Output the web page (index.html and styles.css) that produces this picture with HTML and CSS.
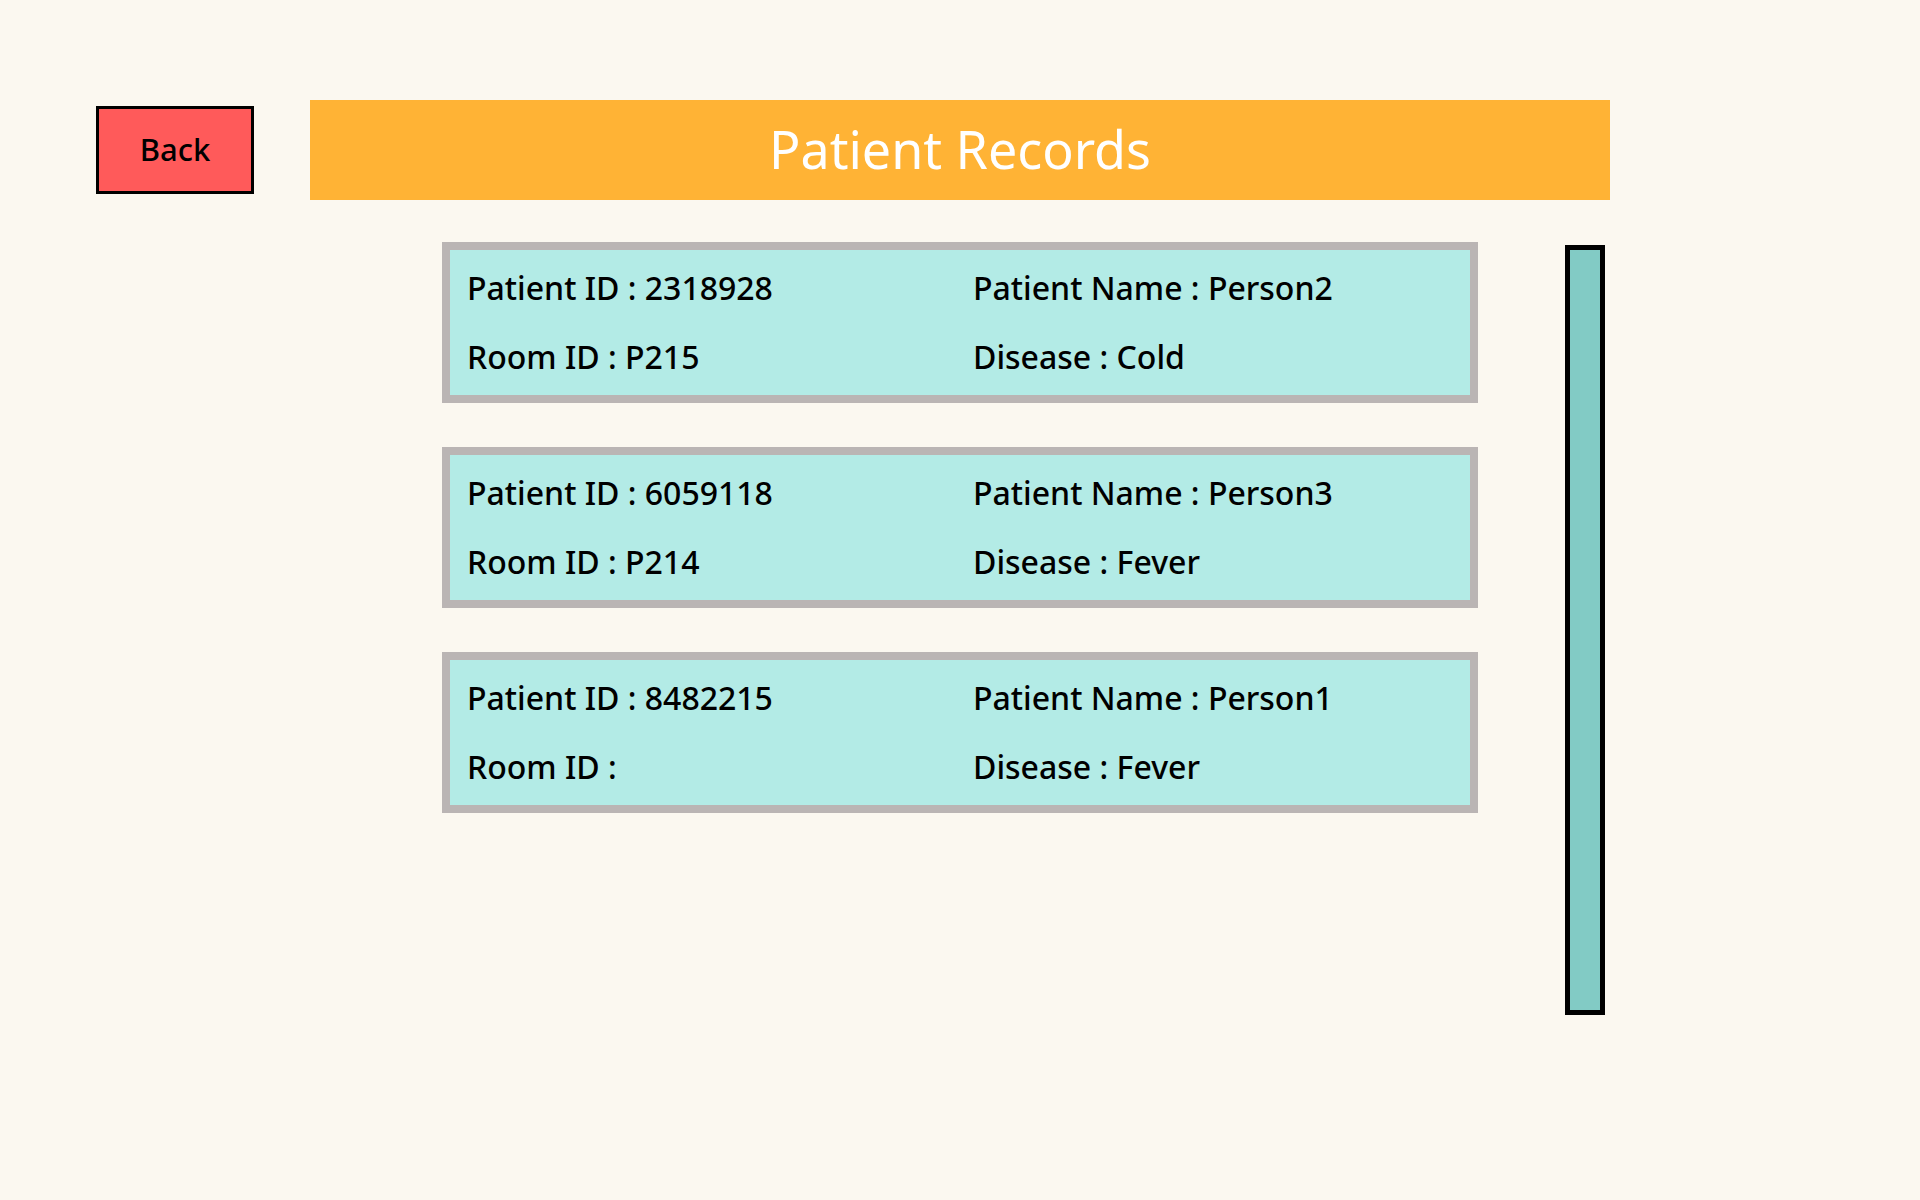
FILE: index.html
```html
<!DOCTYPE html>
<html lang="en">
<head>
<meta charset="utf-8">
<title>Patient Records</title>
<link rel="stylesheet" href="styles.css">
</head>
<body>
<div class="top">
  <button class="back">Back</button>
  <div class="header">Patient Records</div>
</div>
<div class="main">
  <div class="list">
    <div class="card">
      <div>Patient ID : 2318928</div>
      <div>Patient Name : Person2</div>
      <div>Room ID : P215</div>
      <div>Disease : Cold</div>
    </div>
    <div class="card">
      <div>Patient ID : 6059118</div>
      <div>Patient Name : Person3</div>
      <div>Room ID : P214</div>
      <div>Disease : Fever</div>
    </div>
    <div class="card">
      <div>Patient ID : 8482215</div>
      <div>Patient Name : Person1</div>
      <div>Room ID : </div>
      <div>Disease : Fever</div>
    </div>
  </div>
  <div class="scrollbar"></div>
</div>
</body>
</html>
```

FILE: styles.css
```css
html, body {
  margin: 0;
  padding: 0;
}
body {
  background: #fbf8f0;
  font-family: "Noto Sans", "Open Sans", sans-serif;
  color: #000;
  width: 1920px;
  height: 1200px;
}
.top {
  display: flex;
  align-items: center;
  padding: 100px 0 0 96px;
  gap: 56px;
}
.back {
  box-sizing: border-box;
  width: 158px;
  height: 88px;
  background: #ff5a5a;
  border: 3px solid #000;
  font-family: "Noto Sans", "Open Sans", sans-serif;
  font-weight: 500;
  font-size: 31px;
  color: #000;
  padding: 0 0 2px 0;
  margin: 0;
}
.header {
  box-sizing: border-box;
  width: 1300px;
  height: 100px;
  padding-bottom: 4px;
  background: #ffb335;
  color: #fff;
  font-size: 52px;
  display: flex;
  align-items: center;
  justify-content: center;
}
.main {
  display: flex;
  align-items: flex-start;
  padding: 42px 0 0 442px;
}
.list {
  display: flex;
  flex-direction: column;
  gap: 44px;
  width: 1036px;
}
.card {
  box-sizing: border-box;
  height: 161px;
  border: 8px solid #bab5b4;
  background: #b3ebe6;
  display: grid;
  grid-template-columns: 506px 1fr;
  row-gap: 28px;
  padding: 17px 16px 0 17px;
  font-size: 32px;
  font-weight: 500;
  line-height: 41px;
  align-content: start;
}
.scrollbar {
  box-sizing: border-box;
  margin: 3px 0 0 87px;
  width: 40px;
  height: 770px;
  border: 5px solid #000;
  background: #82cbc5;
}
```
